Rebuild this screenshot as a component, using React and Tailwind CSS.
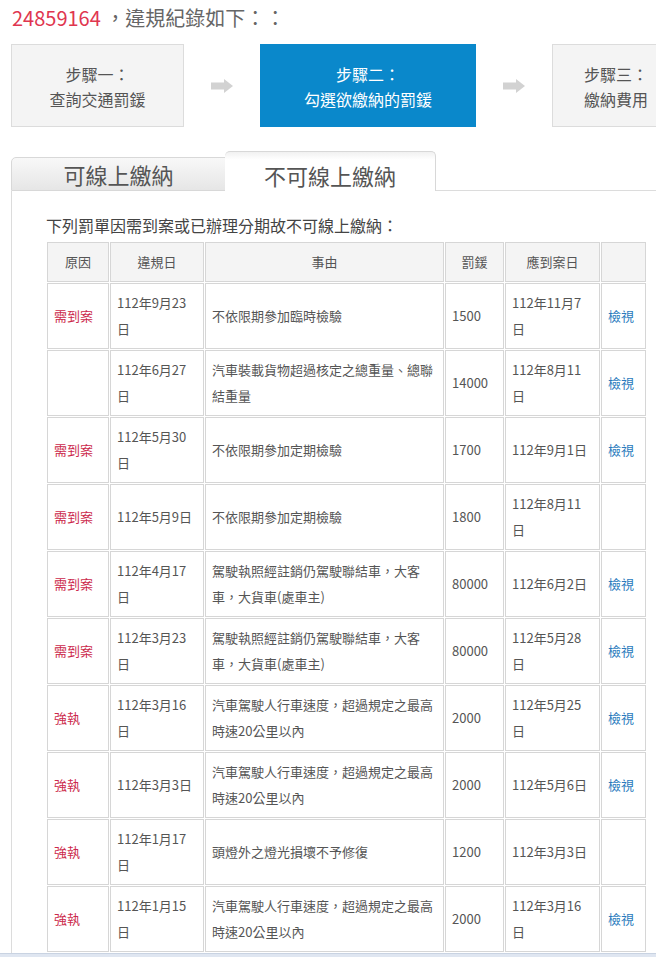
import React from 'react';

const FONT = { fontFamily: '"Noto Sans CJK TC", "Noto Sans", sans-serif' };

const speed = ['汽車駕駛人行車速度，超過規定之最高', '時速20公里以內'];
const license = ['駕駛執照經註銷仍駕駛聯結車，大客', '車，大貨車(處車主)'];

const rows = [
  { reason: '需到案', date: ['112年9月23', '日'], cause: ['不依限期參加臨時檢驗'], fine: '1500', due: ['112年11月7', '日'], view: true },
  { reason: '', date: ['112年6月27', '日'], cause: ['汽車裝載貨物超過核定之總重量、總聯', '結重量'], fine: '14000', due: ['112年8月11', '日'], view: true },
  { reason: '需到案', date: ['112年5月30', '日'], cause: ['不依限期參加定期檢驗'], fine: '1700', due: ['112年9月1日'], view: true },
  { reason: '需到案', date: ['112年5月9日'], cause: ['不依限期參加定期檢驗'], fine: '1800', due: ['112年8月11', '日'], view: false },
  { reason: '需到案', date: ['112年4月17', '日'], cause: license, fine: '80000', due: ['112年6月2日'], view: true },
  { reason: '需到案', date: ['112年3月23', '日'], cause: license, fine: '80000', due: ['112年5月28', '日'], view: true },
  { reason: '強執', date: ['112年3月16', '日'], cause: speed, fine: '2000', due: ['112年5月25', '日'], view: true },
  { reason: '強執', date: ['112年3月3日'], cause: speed, fine: '2000', due: ['112年5月6日'], view: true },
  { reason: '強執', date: ['112年1月17', '日'], cause: ['頭燈外之燈光損壞不予修復'], fine: '1200', due: ['112年3月3日'], view: false },
  { reason: '強執', date: ['112年1月15', '日'], cause: speed, fine: '2000', due: ['112年3月16', '日'], view: true },
];

const Lines = ({ lines }) => (
  <>
    {lines.map((l, i) => (
      <div key={i} className="whitespace-nowrap">{l}</div>
    ))}
  </>
);

const Arrow = () => (
  <div className="w-[76px] flex items-center justify-center">
    <svg width="22" height="14" viewBox="0 0 22 14">
      <rect x="0" y="3.5" width="13" height="7" fill="#d2d2d2" />
      <polygon points="13,0 22,7 13,14" fill="#d2d2d2" />
    </svg>
  </div>
);

const cell = 'border border-[#d6d6d6] px-[6px] py-[6px] leading-[26px] align-middle';

export default function App() {
  return (
    <div className="w-full overflow-hidden bg-white text-[#555]" style={FONT}>
      <div className="w-[800px] pl-[11px]">
        {/* title */}
        <div className="pt-[4px] pl-[1px] text-[20px] leading-[28px] text-[#666]">
          <span className="text-[#e0364f]">24859164</span> ，違規紀錄如下：：
        </div>

        {/* steps */}
        <div className="flex mt-[12px]">
          <div className="w-[173px] h-[83px] bg-[#f4f4f4] border border-[#dcdcdc] flex flex-col items-center justify-center pt-[3px] text-[16px] leading-[25px] text-[#555]">
            <div>步驟一：</div>
            <div>查詢交通罰鍰</div>
          </div>
          <Arrow />
          <div className="w-[216px] h-[83px] bg-[#0a88cb] flex flex-col items-center justify-center pt-[3px] text-[16px] leading-[25px] text-white">
            <div>步驟二：</div>
            <div>勾選欲繳納的罰鍰</div>
          </div>
          <Arrow />
          <div className="w-[216px] h-[83px] bg-[#f4f4f4] border border-[#dcdcdc] flex flex-col justify-center pl-[31px] pt-[3px] text-[16px] leading-[25px] text-[#555]">
            <div>步驟三：</div>
            <div>繳納費用</div>
          </div>
        </div>

        {/* tabs */}
        <div className="flex items-end mt-[24px] w-[645px]">
          <div className="w-[215px] h-[34px] flex items-center justify-center border border-[#d8d8d8] rounded-tl-[5px] bg-gradient-to-b from-[#f8f8f8] to-[#e6e6e6] text-[22px] leading-[30px] text-[#555]">
            可線上繳納
          </div>
          <div className="w-[211px] h-[40px] flex items-center justify-center pt-[6px] border-t border-r border-[#d8d8d8] rounded-t-[5px] bg-gradient-to-b from-[#f1f1f1] to-white to-[20%] text-[22px] leading-[30px] text-[#555] -ml-px">
            不可線上繳納
          </div>
          <div className="flex-1 border-b border-[#dcdcdc]" />
        </div>

        {/* panel */}
        <div className="w-[671px] border-l border-r border-[#dcdcdc] pl-[34px] pt-[22px]">
          <div className="text-[16px] leading-[24px] text-[#444]">下列罰單因需到案或已辦理分期故不可線上繳納：</div>
          <table className="mt-[4px] table-fixed w-[601px] border-separate border-spacing-[1px] text-[13px] text-[#555]">
            <thead>
              <tr className="bg-[#f4f4f4]">
                <th className={`${cell} w-[62px] font-normal text-center`}>原因</th>
                <th className={`${cell} w-[94px] font-normal text-center`}>違規日</th>
                <th className={`${cell} w-[239px] font-normal text-center`}>事由</th>
                <th className={`${cell} w-[59px] font-normal text-center`}>罰鍰</th>
                <th className={`${cell} w-[95px] font-normal text-center`}>應到案日</th>
                <th className={`${cell} w-[45px] font-normal text-center`}></th>
              </tr>
            </thead>
            <tbody>
              {rows.map((r, i) => (
                <tr key={i}>
                  <td className={`${cell} text-[#cc2a4c] whitespace-nowrap`}>{r.reason}</td>
                  <td className={cell}><Lines lines={r.date} /></td>
                  <td className={cell}><Lines lines={r.cause} /></td>
                  <td className={cell}>{r.fine}</td>
                  <td className={cell}><Lines lines={r.due} /></td>
                  <td className={`${cell} text-[#2b7bbd] whitespace-nowrap`}>{r.view ? '檢視' : ''}</td>
                </tr>
              ))}
            </tbody>
          </table>
        </div>
      </div>
      <div className="h-[6px] bg-[#dfe6f1] border-t border-[#c9d3e2]" />
    </div>
  );
}
